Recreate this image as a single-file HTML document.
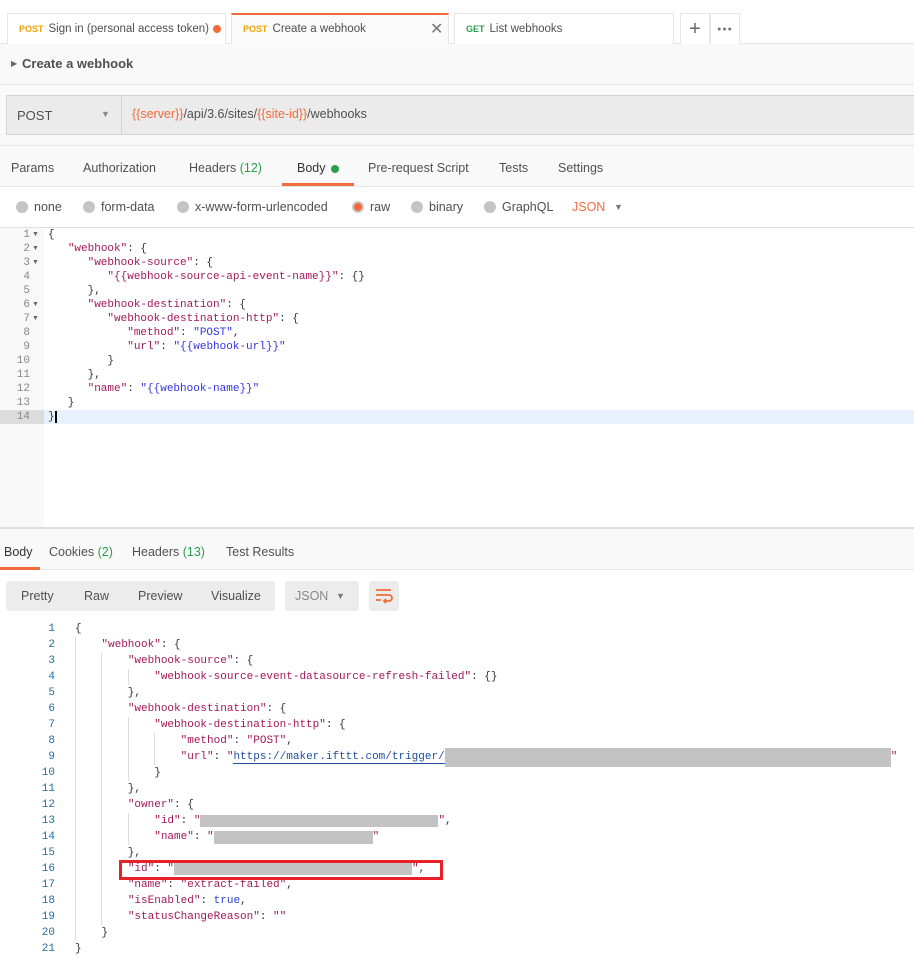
<!DOCTYPE html>
<html><head><meta charset="utf-8">
<style>
*{margin:0;padding:0;box-sizing:border-box}
body{width:914px;height:973px;background:#fff;font-family:"Liberation Sans",sans-serif;font-size:12px;color:#505050;position:relative;overflow:hidden}
.a{position:absolute;white-space:pre}
.tab{position:absolute;top:13px;height:31px;border:1px solid #e6e6e6;border-bottom:none;background:#fff;font-size:11.5px;line-height:31px;padding-left:11px;color:#505050}
.m{font-size:9px;font-weight:bold;margin-right:5px}
.k{color:#a1195a}
.s{color:#3434e6}
.v{color:#a1195a}
.b{color:#2a3fd4}
.radio{position:absolute;top:201px;width:12px;height:12px;border-radius:50%;background:#c4c4c4}
.gray{background:#c3c3c3;display:inline-block;vertical-align:top;height:16px}
.g19{height:19px;margin:-1px 0 -2px}
.g12{height:12px;margin-top:2px;margin-bottom:2px}
</style></head><body>
<!-- tabs -->
<div class="a" style="left:0;top:43px;width:914px;height:1px;background:#e6e6e6"></div>
<div class="tab" style="left:7px;width:219px"><span class="m" style="color:#f0a500">POST</span>Sign in (personal access token)<span style="position:absolute;left:205px;top:11px;width:8px;height:8px;border-radius:50%;background:#f26b3a"></span></div>
<div class="tab" style="left:231px;width:218px;border-top:2px solid #f26b3a;height:32px;line-height:29px;background:#fafafa"><span class="m" style="color:#f0a500">POST</span>Create a webhook<span style="position:absolute;left:198px;top:0;font-size:16px;color:#777">✕</span></div>
<div class="tab" style="left:454px;width:220px"><span class="m" style="color:#27a14b">GET</span>List webhooks</div>
<div class="tab" style="left:680px;width:30px;padding:0;text-align:center;font-size:20px;color:#666">+</div>
<div class="tab" style="left:710px;width:30px;padding:0;text-align:center;font-size:7px;color:#777;letter-spacing:1px">●●●</div>
<!-- header -->
<div class="a" style="left:0;top:44px;width:914px;height:41px;background:#f9f9f9;border-bottom:1px solid #e6e6e6"></div>
<div class="a" style="left:11px;top:59px;font-size:8px;color:#666">▶</div>
<div class="a" style="left:22px;top:56px;font-size:13px;font-weight:bold;color:#505050">Create a webhook</div>
<div class="a" style="left:0;top:85px;width:914px;height:62px;background:#f9f9f9"></div>
<div class="a" style="left:6px;top:95px;width:908px;height:40px;background:#ebebeb;border:1px solid #d4d4d4;border-right:none"></div>
<div class="a" style="left:121px;top:96px;width:1px;height:38px;background:#d4d4d4"></div>
<div class="a" style="left:17px;top:108px;font-size:13px;color:#505050">POST</div>
<div class="a" style="left:101px;top:109px;font-size:9px;color:#888">▼</div>
<div class="a" style="left:132px;top:107px;font-size:12.5px;color:#505050"><span style="color:#f26b3a">{{server}}</span>/api/3.6/sites/<span style="color:#f26b3a">{{site-id}}</span>/webhooks</div>
<div class="a" style="left:0;top:145px;width:914px;height:1px;background:#e6e6e6"></div>
<!-- tab row -->
<div class="a" style="left:0;top:146px;width:914px;height:41px;background:#f9f9f9;border-bottom:1px solid #e6e6e6"></div>
<div class="a" style="left:11px;top:161px;font-size:12.5px">Params</div>
<div class="a" style="left:83px;top:161px;font-size:12.5px">Authorization</div>
<div class="a" style="left:189px;top:161px;font-size:12.5px">Headers <span style="color:#27a14b">(12)</span></div>
<div class="a" style="left:297px;top:161px;font-size:12.5px;color:#333">Body</div>
<div class="a" style="left:331px;top:165px;width:8px;height:8px;border-radius:50%;background:#27a14b"></div>
<div class="a" style="left:282px;top:183px;width:72px;height:3px;background:#f26b3a"></div>
<div class="a" style="left:368px;top:161px;font-size:12.5px">Pre-request Script</div>
<div class="a" style="left:499px;top:161px;font-size:12.5px">Tests</div>
<div class="a" style="left:558px;top:161px;font-size:12.5px">Settings</div>
<!-- radios -->
<div class="radio" style="left:16px"></div><div class="a" style="left:34px;top:200px;font-size:12.5px">none</div>
<div class="radio" style="left:83px"></div><div class="a" style="left:101px;top:200px;font-size:12.5px">form-data</div>
<div class="radio" style="left:177px"></div><div class="a" style="left:195px;top:200px;font-size:12.5px">x-www-form-urlencoded</div>
<div class="radio" style="left:352px;background:#f26b3a;border:2px solid #c8c8c8"></div><div class="a" style="left:370px;top:200px;font-size:12.5px">raw</div>
<div class="radio" style="left:411px"></div><div class="a" style="left:429px;top:200px;font-size:12.5px">binary</div>
<div class="radio" style="left:484px"></div><div class="a" style="left:502px;top:200px;font-size:12.5px">GraphQL</div>
<div class="a" style="left:572px;top:200px;font-size:12.5px;color:#f26b3a">JSON</div>
<div class="a" style="left:614px;top:202px;font-size:9px;color:#777">▼</div>
<div class="a" style="left:0;top:227px;width:914px;height:1px;background:#e0e0e0"></div>
<!-- editor -->
<div class="a" style="left:0;top:228px;width:44px;height:299px;background:#f8f8f8"></div>
<div class="a" style="left:0;top:410px;width:914px;height:14px;background:#e8f2fe"></div>
<div class="a" style="left:0;top:410px;width:44px;height:14px;background:#dcdcdc"></div>
<div class="a" style="left:55px;top:411px;width:2px;height:12px;background:#000"></div>
<div class="a" style="left:0;top:527px;width:914px;height:2px;background:#dedede"></div>
<div class="a" style="left:0;top:228px;line-height:14px;font-family:'Liberation Mono',monospace;font-size:11px;color:#888;text-align:right;width:30px">1<br>2<br>3<br>4<br>5<br>6<br>7<br>8<br>9<br>10<br>11<br>12<br>13<br>14</div>
<div class="a" style="left:32px;top:228px;line-height:14px;font-size:7px;color:#666">▼<br>▼<br>▼<br><br><br>▼<br>▼</div>
<div class="a" style="left:48px;top:228px;line-height:14px;font-family:'Liberation Mono',monospace;font-size:11px;color:#333">{
   <span class="k">"webhook"</span>: {
      <span class="k">"webhook-source"</span>: {
         <span class="k">"{{webhook-source-api-event-name}}"</span>: {}
      },
      <span class="k">"webhook-destination"</span>: {
         <span class="k">"webhook-destination-http"</span>: {
            <span class="k">"method"</span>: <span class="s">"POST"</span>,
            <span class="k">"url"</span>: <span class="s">"{{webhook-url}}"</span>
         }
      },
      <span class="k">"name"</span>: <span class="s">"{{webhook-name}}"</span>
   }
}</div>
<!-- response tabs -->
<div class="a" style="left:0;top:529px;width:914px;height:41px;background:#f9f9f9;border-bottom:1px solid #e6e6e6"></div>
<div class="a" style="left:4px;top:545px;font-size:12.5px;color:#333">Body</div>
<div class="a" style="left:0;top:567px;width:40px;height:3px;background:#f26b3a"></div>
<div class="a" style="left:49px;top:545px;font-size:12.5px">Cookies <span style="color:#27a14b">(2)</span></div>
<div class="a" style="left:132px;top:545px;font-size:12.5px">Headers <span style="color:#27a14b">(13)</span></div>
<div class="a" style="left:226px;top:545px;font-size:12.5px">Test Results</div>
<div class="a" style="left:6px;top:581px;width:269px;height:30px;background:#ececec;border-radius:3px"></div>
<div class="a" style="left:21px;top:589px;font-size:12.5px">Pretty</div>
<div class="a" style="left:84px;top:589px;font-size:12.5px">Raw</div>
<div class="a" style="left:138px;top:589px;font-size:12.5px">Preview</div>
<div class="a" style="left:211px;top:589px;font-size:12.5px">Visualize</div>
<div class="a" style="left:285px;top:581px;width:74px;height:30px;background:#ececec;border-radius:3px"></div>
<div class="a" style="left:295px;top:589px;font-size:12.5px;color:#888">JSON</div>
<div class="a" style="left:336px;top:591px;font-size:9px;color:#777">▼</div>
<div class="a" style="left:369px;top:581px;width:30px;height:30px;background:#ececec;border-radius:3px"></div>
<svg class="a" style="left:375px;top:588px" width="18" height="16" viewBox="0 0 18 16"><path d="M1 2h15M1 7h13a3 3 0 0 1 0 6H9M11 11l-2 2 2 2M1 12h5" stroke="#f26b3a" stroke-width="1.8" fill="none"/></svg>
<!-- response code -->
<div class="a" style="left:0;top:621px;line-height:16px;font-family:'Liberation Mono',monospace;font-size:11px;color:#1f6fa8;text-align:right;width:55px">1<br>2<br>3<br>4<br>5<br>6<br>7<br>8<br>9<br>10<br>11<br>12<br>13<br>14<br>15<br>16<br>17<br>18<br>19<br>20<br>21</div>
<div class="a" style="left:75px;top:637px;width:1px;height:304px;background:#ddd"></div>
<div class="a" style="left:101px;top:653px;width:1px;height:272px;background:#ddd"></div>
<div class="a" style="left:128px;top:669px;width:1px;height:16px;background:#ddd"></div>
<div class="a" style="left:128px;top:717px;width:1px;height:64px;background:#ddd"></div>
<div class="a" style="left:154px;top:733px;width:1px;height:32px;background:#ddd"></div>
<div class="a" style="left:128px;top:813px;width:1px;height:32px;background:#ddd"></div>
<div class="a" style="left:75px;top:621px;line-height:16px;font-family:'Liberation Mono',monospace;font-size:11px;color:#333">{
    <span class="k">"webhook"</span>: {
        <span class="k">"webhook-source"</span>: {
            <span class="k">"webhook-source-event-datasource-refresh-failed"</span>: {}
        },
        <span class="k">"webhook-destination"</span>: {
            <span class="k">"webhook-destination-http"</span>: {
                <span class="k">"method"</span>: <span class="v">"POST"</span>,
                <span class="k">"url"</span>: <span class="v">"</span><span style="color:#1f4fa0;border-bottom:1px solid #1f4fa0">https://maker.ifttt.com/trigger/</span><span class="gray g19" style="width:446px"></span><span class="v">"</span>
            }
        },
        <span class="k">"owner"</span>: {
            <span class="k">"id"</span>: <span class="v">"</span><span class="gray g12" style="width:238px"></span><span class="v">"</span>,
            <span class="k">"name"</span>: <span class="v">"</span><span class="gray" style="width:159px;height:13px;margin-top:2px;margin-bottom:1px"></span><span class="v">"</span>
        },
        <span class="k">"id"</span>: <span class="v">"</span><span class="gray g12" style="width:238px"></span><span class="v">"</span>,
        <span class="k">"name"</span>: <span class="v">"extract-failed"</span>,
        <span class="k">"isEnabled"</span>: <span class="b">true</span>,
        <span class="k">"statusChangeReason"</span>: <span class="v">""</span>
    }
}</div>
<div class="a" style="left:119px;top:860px;width:324px;height:20px;border:3px solid #e8202a"></div>
</body></html>
